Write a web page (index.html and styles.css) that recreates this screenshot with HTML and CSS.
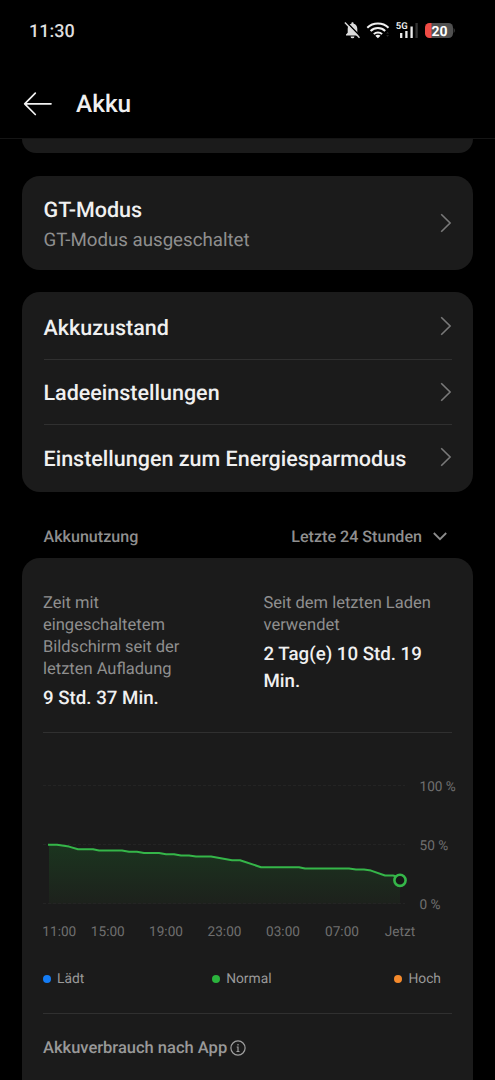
FILE: index.html
```html
<!DOCTYPE html>
<html lang="de">
<head>
<meta charset="utf-8">
<title>Akku</title>
<link rel="stylesheet" href="styles.css">
</head>
<body>
<div class="screen">
  <div class="statusbar">
    <span class="clock">11:30</span>
    <svg class="status-icons" width="116" height="24" viewBox="0 0 116 24">
      <path d="M6 16.600v-1.200l1.700-1.700V9.800c0-2.700 1.400-4.500 3.700-5v-.5c0-.6.400-1.100 1.100-1.100s1.100.5 1.100 1.100v.5c2.300.5 3.700 2.300 3.700 5v3.900l1.700 1.700v1.200z" fill="#dcdcdc"/>
      <path d="M10.600 17.400h3.800a1.900 1.900 0 0 1-3.800 0z" fill="#dcdcdc"/>
      <path d="M6.300 3 20.800 17.800" stroke="#000" stroke-width="1.600"/>
      <path d="M4.900 3.600 19.500 18.800" stroke="#dcdcdc" stroke-width="1.400"/>
      <g fill="none" stroke="#f0f0f0" stroke-width="2">
        <path d="M27.300 8.700c5.800-5.600 15.400-5.600 21.200 0"/>
        <path d="M30.600 12c4-4 10.600-4 14.600 0"/>
        <path d="M33.800 15.100c2.300-2.200 6-2.200 8.300 0"/>
      </g>
      <path d="m35.300 16.700 2.600 2.600 2.600-2.600c-1.500-1.200-3.700-1.200-5.200 0z" fill="#f0f0f0"/>
      <path d="m46.200 14.600 1.400-1.600 1.400 1.600zm0 1.600 1.400 1.600 1.400-1.600z" fill="#333"/>
      <text class="network" x="55.800" y="10">5G</text>
      <path d="M61.200 14v5M66.400 12v7M71.600 7.600V19" stroke="#ececec" stroke-width="2.300"/>
      <path d="M76.600 4v15" stroke="#333" stroke-width="2.300"/>
      <path d="M90 4h18.500a4.500 4.500 0 0 1 4.500 4.500v6a4.500 4.500 0 0 1-4.500 4.500H90z" fill="#505050"/>
      <path d="M113.700 9c1.300.8 1.300 4.200 0 5z" fill="#505050"/>
      <path d="M91.500 4v15h-2a4.500 4.500 0 0 1-4.500-4.500v-6A4.500 4.500 0 0 1 89.500 4z" fill="#ef4b45"/>
      <text class="level" x="99.500" y="16.500" text-anchor="middle">20</text>
    </svg>
  </div>
  <header class="appbar">
    <svg width="30" height="26" viewBox="0 0 30 26" fill="none" stroke="#f2f2f2" stroke-width="1.700" stroke-linecap="round" stroke-linejoin="round"><path d="M28 12.800H1.700M12.300 2.100 1.700 12.800l10.600 10.700"/></svg>
    <h1>Akku</h1>
  </header>
  <main>
    <div class="card card-tail"></div>
    <section class="card gt">
      <div class="gt-text">
        <div class="label">GT-Modus</div>
        <div class="sub">GT-Modus ausgeschaltet</div>
      </div>
      <svg class="chev" viewBox="0 0 12 20"><path d="m1.200 1.300 8.900 8.700-8.900 8.700"/></svg>
    </section>
    <section class="card list">
      <div class="row"><span class="label">Akkuzustand</span><svg class="chev" viewBox="0 0 12 20"><path d="m1.200 1.300 8.900 8.700-8.900 8.700"/></svg></div>
      <div class="row"><span class="label">Ladeeinstellungen</span><svg class="chev" viewBox="0 0 12 20"><path d="m1.200 1.300 8.900 8.700-8.900 8.700"/></svg></div>
      <div class="row"><span class="label">Einstellungen zum Energiesparmodus</span><svg class="chev" viewBox="0 0 12 20"><path d="m1.200 1.300 8.900 8.700-8.900 8.700"/></svg></div>
    </section>
    <div class="section-head">
      <span>Akkunutzung</span>
      <span class="range">Letzte 24 Stunden
        <svg width="14" height="10" viewBox="0 0 14 10" fill="none" stroke="#8c8c8c" stroke-width="1.800"><path d="m.8 1 6.200 6.200L13.200 1"/></svg>
      </span>
    </div>
    <section class="card usage">
      <div class="stats">
        <div><p>Zeit mit<br>eingeschaltetem<br>Bildschirm seit der<br>letzten Aufladung</p><strong>9 Std. 37 Min.</strong></div>
        <div><p>Seit dem letzten Laden<br>verwendet</p><strong>2 Tag(e) 10 Std. 19<br>Min.</strong></div>
      </div>
      <svg class="chart" width="430" height="210" viewBox="43 733 430 210">
        <defs>
          <linearGradient id="fill" x1="0" y1="0" x2="0" y2="1"><stop offset="0" stop-color="#1b351f"/><stop offset="1" stop-color="#1d211c"/></linearGradient>
        </defs>
        <path class="area" d="M49 844.800H57L69 846.600 78 849.200H93L99 850.400H122L129 851.700H137L144 853H159L166 854.200H174L181 855.600H189L196 856.600H211L232 860.200H240L261 867.200H299L305 868.500H349L356 869.500H364L371 870.600 385 875.500H393L400 877.500V904H49z"/>
        <path class="grid" d="M43 785.500H405M43 844.500H405M43 903.500H405"/>
        <path class="curve" d="M48 844.800H57L69 846.600 78 849.200H93L99 850.400H122L129 851.700H137L144 853H159L166 854.200H174L181 855.600H189L196 856.600H211L232 860.200H240L261 867.200H299L305 868.500H349L356 869.500H364L371 870.600 385 875.500H393L400 877.500"/>
        <circle cx="400" cy="880.300" r="5.600" fill="#171717" stroke="#35b649" stroke-width="2.600"/>
        <g class="axis">
          <text x="419.500" y="791">100 %</text>
          <text x="419.500" y="850">50 %</text>
          <text x="419.500" y="909">0 %</text>
          <g text-anchor="middle">
            <text x="59.300" y="936">11:00</text>
            <text x="107.800" y="936">15:00</text>
            <text x="166" y="936">19:00</text>
            <text x="224.500" y="936">23:00</text>
            <text x="283" y="936">03:00</text>
            <text x="342" y="936">07:00</text>
            <text x="400" y="936">Jetzt</text>
          </g>
        </g>
      </svg>
      <div class="legend">
        <span class="blue">Lädt</span><span class="green">Normal</span><span class="orange">Hoch</span>
      </div>
      <div class="apps">
        <span>Akkuverbrauch nach App</span>
        <svg width="16" height="16" viewBox="0 0 16 16" fill="none" stroke="#a0a0a0"><circle cx="8" cy="8" r="7.100" stroke-width="1.200"/><path d="M8 4v1.600M6.700 7H8v4.200M6.500 11.500h3" stroke-width="1.200"/></svg>
      </div>
    </section>
  </main>
</div>
</body>
</html>
```
FILE: styles.css
```css
* { box-sizing: border-box; }
body { margin: 0; background: #000; font-family: Roboto, sans-serif; color: #f0f0f0; text-rendering: geometricPrecision; }
.screen { width: 495px; height: 1080px; overflow: hidden; display: flex; flex-direction: column; }
.statusbar { height: 62px; flex: none; display: flex; justify-content: space-between; align-items: center; padding: 0 35px 0 29px; }
.clock { font-size: 18px; font-weight: 500; color: #dedede; }
.status-icons { margin-right: 4px; }
.network { font-size: 9.5px; font-weight: 600; fill: #f0f0f0; }
.level { font-size: 14px; font-weight: 700; fill: #fff; }
.appbar { height: 77px; flex: none; display: flex; align-items: center; gap: 23px; padding: 7px 0 0 23px; border-bottom: 1px solid #151515; }
h1 { margin: 0; font-size: 24.4px; line-height: 30px; font-weight: 500; }
main { padding: 0 22px; flex: none; }
.card { background: #1b1b1b; border-radius: 18px; }
.card-tail { height: 14px; border-radius: 0 0 18px 18px; }
.gt { margin-top: 23px; height: 94px; padding: 0 21px 0 21.5px; display: flex; align-items: center; justify-content: space-between; }
.gt-text { padding-top: 4px; }
.label { font-size: 21.5px; line-height: 30px; font-weight: 500; }
.sub { font-size: 18.7px; line-height: 29px; color: #8f8f8f; }
.chev { width: 12px; height: 20px; fill: none; stroke: #797979; stroke-width: 1.600; flex: none; }
.list { margin-top: 22px; height: 200px; padding: 1px 21px 2px 21.5px; }
.row { height: 65.500px; display: flex; align-items: center; justify-content: space-between; }
.row .label { padding-top: 5px; }
.row:first-child .label { padding-top: 6px; }
.row + .row { border-top: 1px solid #303030; }
.section-head { height: 66px; padding: 23px 26px 0 21.5px; display: flex; justify-content: space-between; font-size: 16.100px; line-height: 44px; font-weight: 500; color: #8f8f8f; }
.range { display: flex; align-items: center; gap: 11px; height: 44px; }
.usage { height: 560px; padding: 34px 21px 0; }
.stats { height: 141px; display: grid; grid-template-columns: 220.500px 1fr; border-bottom: 1px solid #303030; }
.stats p { margin: 0; padding-top: 1px; font-size: 16.500px; line-height: 22px; color: #8f8f8f; }
.stats strong { display: block; margin-top: 4px; font-size: 18.7px; line-height: 27px; font-weight: 500; }
.chart { display: block; }
.area { fill: url(#fill); }
.grid { stroke: #242424; stroke-dasharray: 3 2; }
.curve { fill: none; stroke: #35b649; stroke-width: 2; stroke-linejoin: round; }
.axis { font-size: 13.6px; fill: #6f6f6f; }
.legend { display: flex; justify-content: space-between; height: 71px; padding: 2px 11px 0 0; font-size: 13.8px; color: #999; border-bottom: 1px solid #303030; }
.legend span { display: flex; align-items: center; gap: 6px; }
.legend span::before { content: ""; width: 8px; height: 8px; margin-bottom: 1px; border-radius: 50%; background: currentColor; }
.legend .blue::before { background: #147cf5; }
.legend .green { margin-left: 5px; }
.legend .green::before { background: #2bb33d; }
.legend .orange::before { background: #f58a2c; }
.apps { height: 68px; display: flex; align-items: center; gap: 3px; font-size: 16.500px; font-weight: 500; color: #999; }
```
